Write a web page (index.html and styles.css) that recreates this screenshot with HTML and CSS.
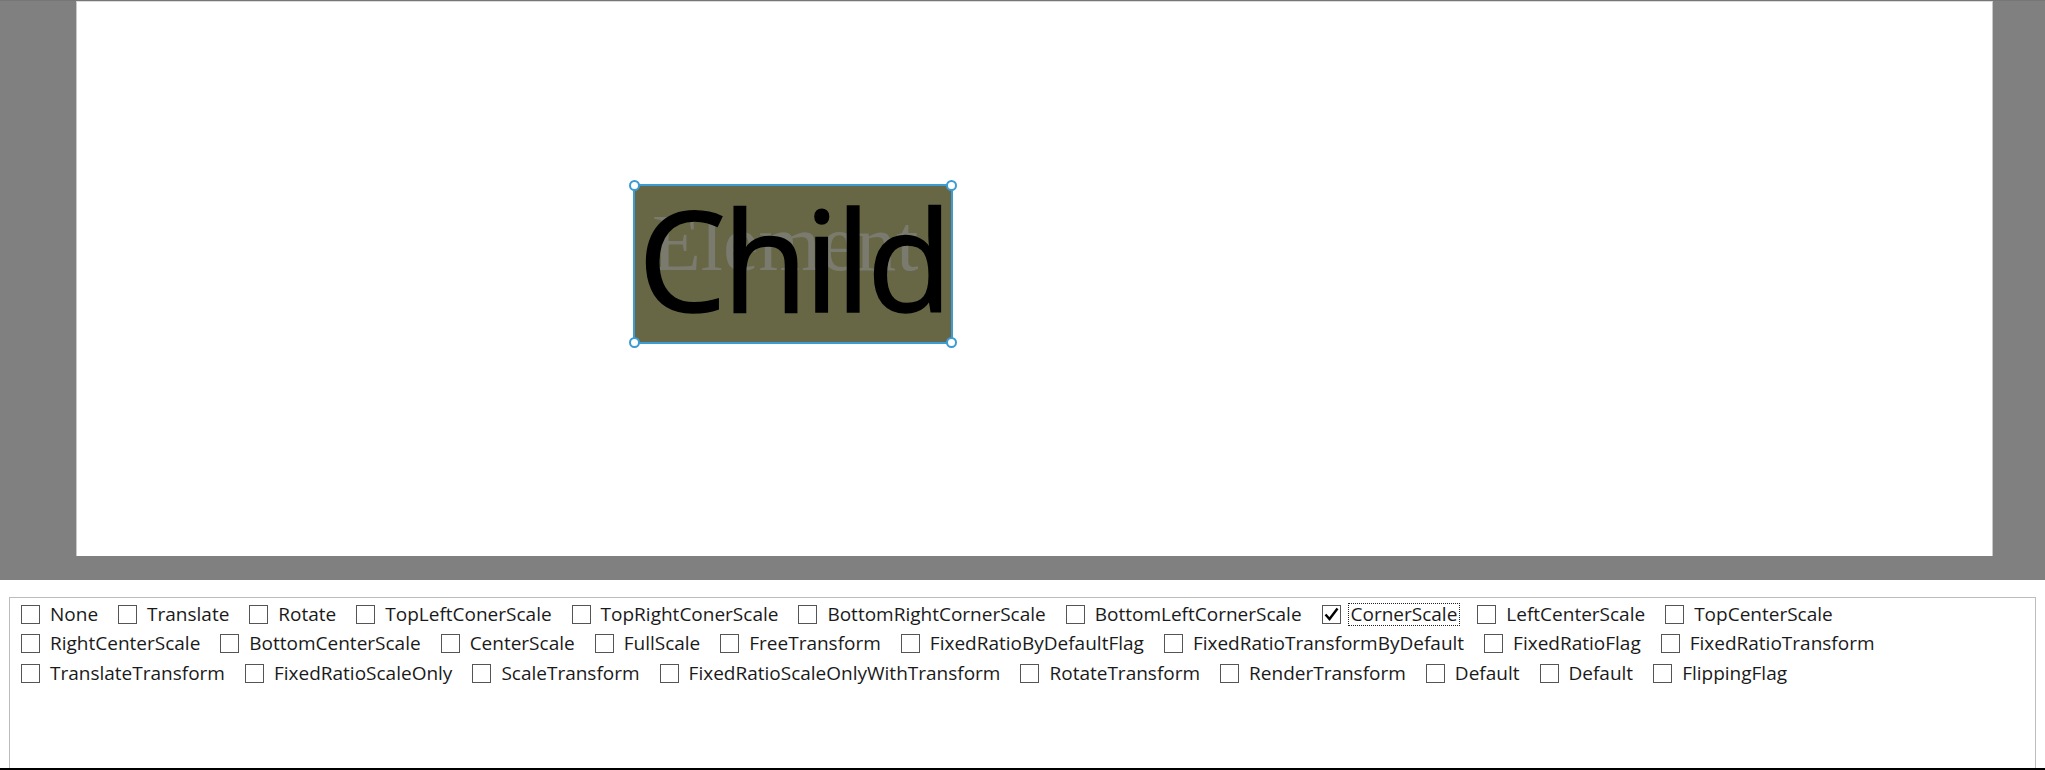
FILE: index.html
```html
<!DOCTYPE html>
<html>
<head>
<meta charset="utf-8">
<link rel="stylesheet" href="styles.css">
</head>
<body>
<div class="stage">
  <div class="canvas">
    <div class="element">
      <span class="element-label">Element</span>
      <span class="child-label">Child</span>
      <span class="handle h-tl"></span>
      <span class="handle h-tr"></span>
      <span class="handle h-bl"></span>
      <span class="handle h-br"></span>
    </div>
  </div>
</div>
<div class="bottom">
  <div class="panel">
    <div class="row">
      <label class="item"><span class="box"></span><span class="text">None</span></label>
      <label class="item"><span class="box"></span><span class="text">Translate</span></label>
      <label class="item"><span class="box"></span><span class="text">Rotate</span></label>
      <label class="item"><span class="box"></span><span class="text">TopLeftConerScale</span></label>
      <label class="item"><span class="box"></span><span class="text">TopRightConerScale</span></label>
      <label class="item"><span class="box"></span><span class="text">BottomRightCornerScale</span></label>
      <label class="item"><span class="box"></span><span class="text">BottomLeftCornerScale</span></label>
      <label class="item checked"><span class="box"><svg viewBox="0 0 19 19" width="19" height="19"><path d="M3.5 9.5 L7.5 14 L15.5 3.5" fill="none" stroke="#000" stroke-width="2.4"/></svg></span><span class="text focus">CornerScale</span></label>
      <label class="item"><span class="box"></span><span class="text">LeftCenterScale</span></label>
      <label class="item"><span class="box"></span><span class="text">TopCenterScale</span></label>
    </div>
    <div class="row">
      <label class="item"><span class="box"></span><span class="text">RightCenterScale</span></label>
      <label class="item"><span class="box"></span><span class="text">BottomCenterScale</span></label>
      <label class="item"><span class="box"></span><span class="text">CenterScale</span></label>
      <label class="item"><span class="box"></span><span class="text">FullScale</span></label>
      <label class="item"><span class="box"></span><span class="text">FreeTransform</span></label>
      <label class="item"><span class="box"></span><span class="text">FixedRatioByDefaultFlag</span></label>
      <label class="item"><span class="box"></span><span class="text">FixedRatioTransformByDefault</span></label>
      <label class="item"><span class="box"></span><span class="text">FixedRatioFlag</span></label>
      <label class="item"><span class="box"></span><span class="text">FixedRatioTransform</span></label>
    </div>
    <div class="row">
      <label class="item"><span class="box"></span><span class="text">TranslateTransform</span></label>
      <label class="item"><span class="box"></span><span class="text">FixedRatioScaleOnly</span></label>
      <label class="item"><span class="box"></span><span class="text">ScaleTransform</span></label>
      <label class="item"><span class="box"></span><span class="text">FixedRatioScaleOnlyWithTransform</span></label>
      <label class="item"><span class="box"></span><span class="text">RotateTransform</span></label>
      <label class="item"><span class="box"></span><span class="text">RenderTransform</span></label>
      <label class="item"><span class="box"></span><span class="text">Default</span></label>
      <label class="item"><span class="box"></span><span class="text">Default</span></label>
      <label class="item"><span class="box"></span><span class="text">FlippingFlag</span></label>
    </div>
  </div>
</div>
</body>
</html>
```
FILE: styles.css
```css
html, body {
  margin: 0;
  padding: 0;
  width: 2045px;
  height: 770px;
  overflow: hidden;
  background: #ffffff;
}
.stage {
  height: 580px;
  background: #808080;
  padding-left: 76px;
  box-sizing: border-box;
  border-top: 1px solid #767676;
}
.canvas {
  position: relative;
  width: 1917px;
  height: 555px;
  background: #ffffff;
  box-sizing: border-box;
  border-top: 1px solid #dcdcdc;
  border-left: 1px solid #c8c8c8;
  border-right: 1px solid #c8c8c8;
}
.element {
  position: absolute;
  left: 556px;
  top: 182px;
  width: 320px;
  height: 160px;
  box-sizing: border-box;
  background: #676745;
  border: 2px solid #3d9bd3;
}
.element-label {
  position: absolute;
  left: 17px;
  top: 17px;
  font-family: "Liberation Serif", serif;
  font-size: 80px;
  line-height: 1;
  color: #7a7a6e;
}
.child-label {
  position: absolute;
  left: 3px;
  top: -19px;
  font-family: "Open Sans", sans-serif;
  font-size: 140px;
  letter-spacing: -4px;
  line-height: 1.3;
  color: #000000;
  -webkit-text-stroke: 1.5px #000;
}
.handle {
  position: absolute;
  width: 11px;
  height: 11px;
  box-sizing: border-box;
  border-radius: 50%;
  background: #ffffff;
  border: 2px solid #3d9bd3;
}
.h-tl { left: -6px; top: -6px; }
.h-tr { right: -6px; top: -6px; }
.h-bl { left: -6px; bottom: -6px; }
.h-br { right: -6px; bottom: -6px; }
.bottom {
  height: 190px;
  padding: 17px 9px 0 9px;
  box-sizing: border-box;
  border-bottom: 2px solid #000;
}
.panel {
  height: 171px;
  box-sizing: border-box;
  border: 1px solid #bcbcbc;
  border-bottom: none;
  padding: 1.5px 0 0 11px;
  font-family: "Open Sans", sans-serif;
  font-size: 19px;
  color: #1a1a1a;
}
.row {
  display: flex;
  align-items: center;
  height: 29.5px;
  gap: 18px;
}
.item {
  display: flex;
  align-items: center;
  gap: 9px;
  white-space: nowrap;
}
.box {
  width: 19px;
  height: 19px;
  box-sizing: border-box;
  border: 1px solid #555555;
  background: #ffffff;
  display: block;
  position: relative;
}
.box svg {
  position: absolute;
  left: -1px;
  top: -1px;
}
.text {
  line-height: 21px;
  padding: 0 2px;
  margin-left: -1px;
}
.focus {
  outline: 1px dotted #222;
  outline-offset: 0;
}
```
